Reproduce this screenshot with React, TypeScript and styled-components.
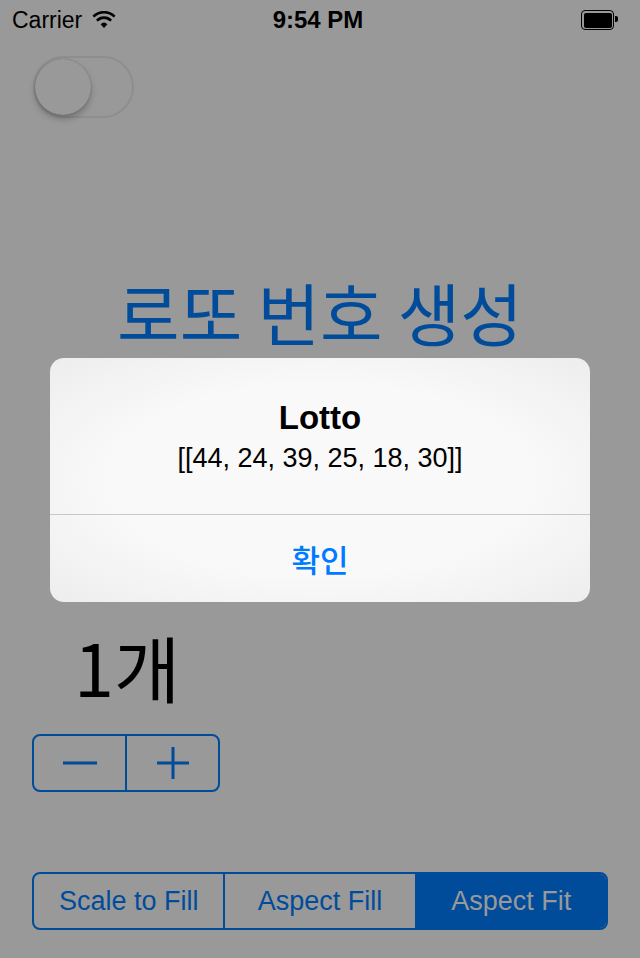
import React from 'react'
import styled, { createGlobalStyle } from 'styled-components'

const GlobalStyle = createGlobalStyle`
  html, body {
    margin: 0;
    padding: 0;
    background: #999999;
  }
`

const Screen = styled.div`
  background: #999999;
  display: flex;
  flex-direction: column;
  font-family: 'Liberation Sans', 'Noto Sans CJK KR', sans-serif;
  height: 958px;
  overflow: hidden;
  position: relative;
  width: 640px;
`

const StatusBar = styled.div`
  align-items: center;
  color: #000;
  display: grid;
  grid-template-columns: 1fr auto 1fr;
  height: 40px;
  padding: 0 26px 0 12px;
`

const Carrier = styled.div`
  align-items: center;
  display: flex;
  font-size: 23px;
  gap: 10px;
`

const Time = styled.div`
  font-size: 24px;
  font-weight: 700;
  padding-left: 10px;
`

const BatteryWrap = styled.div`
  display: flex;
  justify-content: flex-end;
`

const Battery = styled.div`
  border: 1.5px solid #000;
  border-radius: 4px;
  height: 15px;
  padding: 1.5px;
  position: relative;
  width: 28px;

  &::before {
    background: #000;
    border-radius: 2px;
    content: '';
    display: block;
    height: 100%;
    width: 100%;
  }

  &::after {
    background: #000;
    border-radius: 0 2px 2px 0;
    content: '';
    height: 6px;
    position: absolute;
    right: -5px;
    top: 5px;
    width: 3px;
  }
`

const Switch = styled.div`
  border: 2px solid #8e8e8e;
  border-radius: 31px;
  box-sizing: border-box;
  height: 62px;
  margin: 16px 0 0 33px;
  position: relative;
  width: 101px;
`

const Thumb = styled.div`
  background: #999999;
  border-radius: 50%;
  box-shadow: 0 4px 6px rgba(0, 0, 0, 0.25), 0 0 1px rgba(0, 0, 0, 0.35);
  height: 56px;
  left: 0;
  position: absolute;
  top: 1px;
  width: 56px;
`

const Title = styled.h1`
  color: #004c9a;
  font-family: 'Noto Sans CJK KR', sans-serif;
  font-size: 68px;
  font-weight: 400;
  line-height: 80px;
  margin: 154px 0 0;
  text-align: center;
`

const Count = styled.div`
  color: #000;
  font-family: 'Noto Sans CJK KR', sans-serif;
  font-size: 72px;
  line-height: 80px;
  margin: 274px 0 0 74px;
`

const Stepper = styled.div`
  border: 2px solid #004c9a;
  border-radius: 8px;
  box-sizing: border-box;
  display: flex;
  height: 58px;
  margin: 28px 0 0 32px;
  width: 188px;
`

const StepButton = styled.div`
  align-items: center;
  color: #004c9a;
  display: flex;
  flex: 1;
  justify-content: center;

  & + & {
    border-left: 2px solid #004c9a;
  }
`

const Segmented = styled.div`
  border: 2px solid #004c9a;
  border-radius: 8px;
  box-sizing: border-box;
  display: flex;
  height: 58px;
  margin: 80px 32px 0;
  overflow: hidden;
`

const Segment = styled.div<{ $selected?: boolean }>`
  align-items: center;
  background: ${({ $selected }) => ($selected ? '#004c9a' : 'transparent')};
  color: ${({ $selected }) => ($selected ? '#999999' : '#004c9a')};
  display: flex;
  flex: 1;
  font-size: 27px;
  justify-content: center;

  & + & {
    border-left: 2px solid #004c9a;
  }
`

const Alert = styled.div`
  background: radial-gradient(ellipse at center, #f9f9f9 55%, #ededed 100%);
  border-radius: 14px;
  display: flex;
  flex-direction: column;
  height: 244px;
  left: 50px;
  overflow: hidden;
  position: absolute;
  top: 358px;
  width: 540px;
`

const AlertBody = styled.div`
  align-items: center;
  border-bottom: 1px solid #c8c7cc;
  box-sizing: border-box;
  display: flex;
  flex-direction: column;
  height: 157px;
  padding-top: 40px;
`

const AlertTitle = styled.div`
  color: #000;
  font-size: 33px;
  font-weight: 700;
  line-height: 40px;
`

const AlertMessage = styled.div`
  color: #000;
  font-size: 27px;
  line-height: 30px;
  margin-top: 5px;
`

const AlertButton = styled.div`
  align-items: center;
  color: #007aff;
  display: flex;
  flex: 1;
  font-family: 'Noto Sans CJK KR', sans-serif;
  font-size: 31px;
  font-weight: 500;
  justify-content: center;
`

const WifiIcon = () => (
  <svg width="24" height="18" viewBox="0 0 24 18">
    <path d="M12 17 L8.6 13.2 A5 5 0 0 1 15.4 13.2 Z" fill="#000" />
    <path d="M4.9 9.6 A10 10 0 0 1 19.1 9.6" stroke="#000" strokeWidth="2.6" fill="none" />
    <path d="M1.4 5.6 A15 15 0 0 1 22.6 5.6" stroke="#000" strokeWidth="2.6" fill="none" />
  </svg>
)

const MinusIcon = () => (
  <svg width="34" height="4" viewBox="0 0 34 4">
    <rect width="34" height="3" y="0.5" fill="#004c9a" />
  </svg>
)

const PlusIcon = () => (
  <svg width="32" height="32" viewBox="0 0 32 32">
    <rect x="0" y="14.5" width="32" height="3" fill="#004c9a" />
    <rect x="14.5" y="0" width="3" height="32" fill="#004c9a" />
  </svg>
)

export default function App() {
  const numbers = [44, 24, 39, 25, 18, 30]

  return (
    <Screen>
      <GlobalStyle />
      <StatusBar>
        <Carrier>
          Carrier <WifiIcon />
        </Carrier>
        <Time>9:54 PM</Time>
        <BatteryWrap>
          <Battery />
        </BatteryWrap>
      </StatusBar>
      <Switch>
        <Thumb />
      </Switch>
      <Title>로또 번호 생성</Title>
      <Count>1개</Count>
      <Stepper>
        <StepButton>
          <MinusIcon />
        </StepButton>
        <StepButton>
          <PlusIcon />
        </StepButton>
      </Stepper>
      <Segmented>
        <Segment>Scale to Fill</Segment>
        <Segment>Aspect Fill</Segment>
        <Segment $selected>Aspect Fit</Segment>
      </Segmented>
      <Alert>
        <AlertBody>
          <AlertTitle>Lotto</AlertTitle>
          <AlertMessage>{`[[${numbers.join(', ')}]]`}</AlertMessage>
        </AlertBody>
        <AlertButton>확인</AlertButton>
      </Alert>
    </Screen>
  )
}
